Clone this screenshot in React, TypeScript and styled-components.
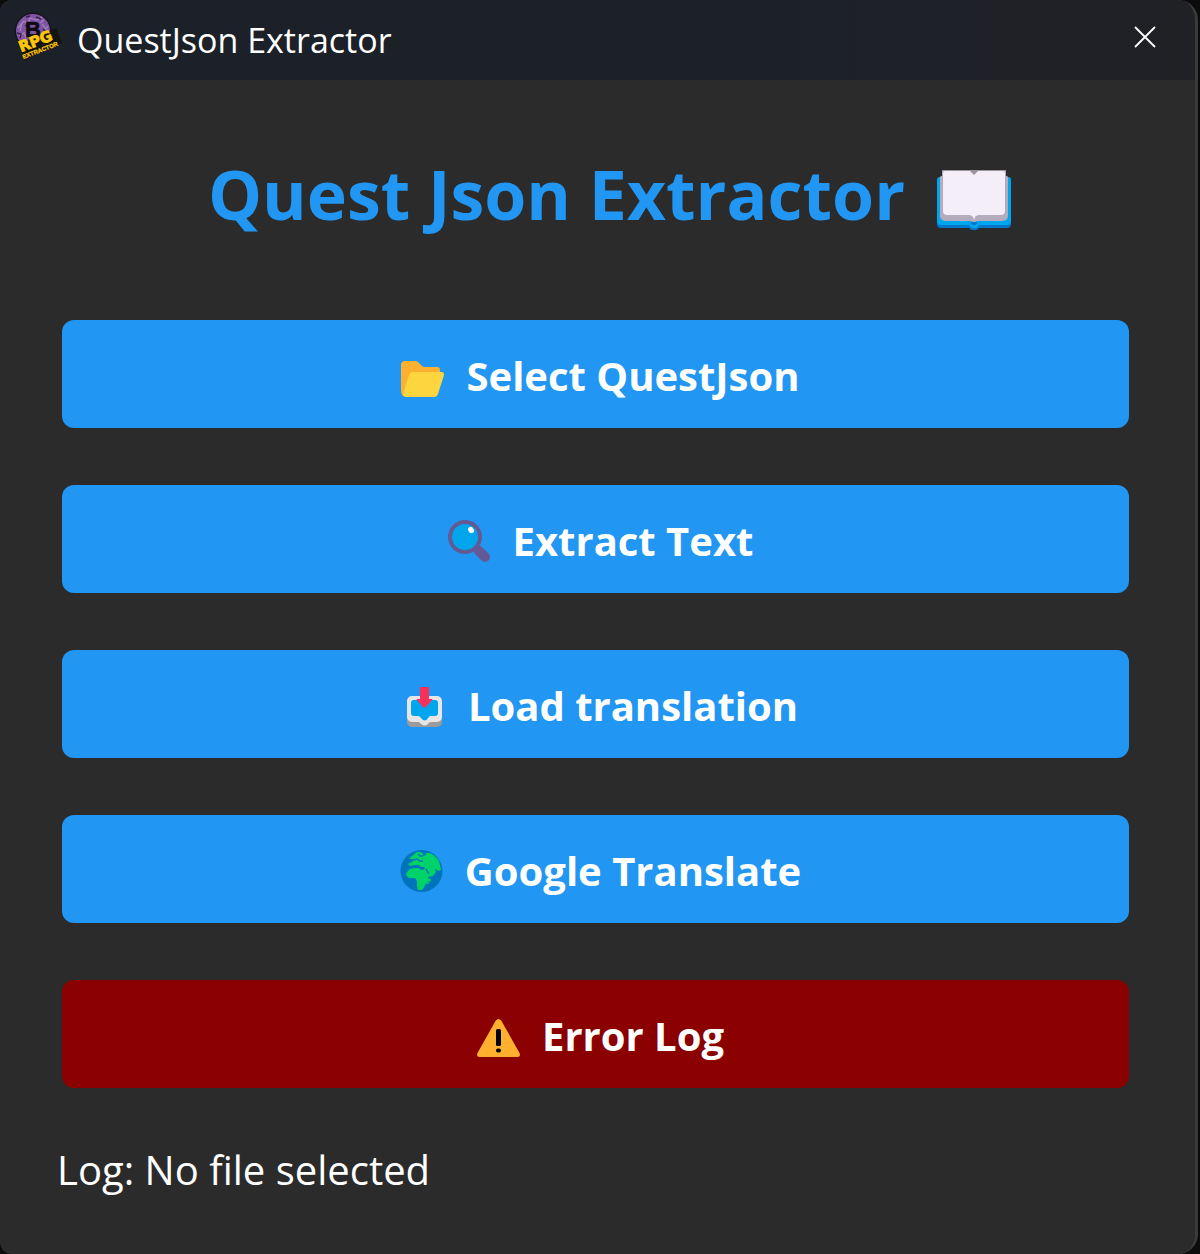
import React from 'react';
import styled, { createGlobalStyle } from 'styled-components';

const GlobalStyle = createGlobalStyle`
  *, *::before, *::after { box-sizing: border-box; }
  body {
    margin: 0;
    background: #0c0c0c;
    font-family: "Segoe UI", "Open Sans", "Noto Sans", sans-serif;
    color: #ffffff;
  }
`;

const Window = styled.div`
  display: flex;
  flex-direction: column;
  min-height: 100vh;
  margin-right: 2px;
  border-right: 3px solid #3a3a3a;
  border-radius: 12px 20px 20px 12px;
  background: #2b2b2b;
  overflow: hidden;
`;

const TitleBar = styled.header`
  display: flex;
  align-items: center;
  height: 80px;
  padding: 0 28px 0 14px;
  background: linear-gradient(90deg, #1c2129 0%, #1c2028 60%, #202125 100%);
`;

const WindowTitle = styled.span`
  flex: 1;
  margin-left: 15px;
  font-size: 34px;
  line-height: 48px;
`;

const CloseButton = styled.button`
  display: flex;
  align-items: center;
  justify-content: center;
  width: 44px;
  height: 44px;
  margin-bottom: 6px;
  padding: 0;
  border: 0;
  background: transparent;
  color: #ffffff;
  cursor: pointer;
`;

const Content = styled.main`
  display: flex;
  flex-direction: column;
  padding: 64px 66px 48px 62px;
`;

const Heading = styled.h1`
  display: flex;
  align-items: center;
  justify-content: center;
  gap: 32px;
  margin: 0 0 76px;
  padding-left: 28px;
  color: #2196f3;
  font-size: 68px;
  font-weight: 700;
  line-height: 100px;
  white-space: nowrap;
`;

const Actions = styled.div`
  display: flex;
  flex-direction: column;
  gap: 57px;
`;

const ActionButton = styled.button<{ $danger?: boolean }>`
  display: flex;
  align-items: center;
  justify-content: center;
  gap: 22px;
  height: 108px;
  padding: 4px 0 0 10px;
  border: 0;
  border-radius: 12px;
  background: ${({ $danger }) => ($danger ? '#8b0000' : '#2196f3')};
  color: #ffffff;
  font-family: inherit;
  font-size: 40px;
  font-weight: 700;
  line-height: 56px;
  white-space: nowrap;
  cursor: pointer;
`;

const Status = styled.p`
  margin: 54px 0 0 -5px;
  font-size: 40px;
  line-height: 56px;
`;

const Glyph = styled.svg`
  display: block;
  flex: none;
`;

const AppLogo = () => (
  <Glyph width="48" height="56" viewBox="0 0 48 56" aria-hidden="true">
    <circle cx="19" cy="19" r="18.5" fill="#15131b" />
    <circle cx="19" cy="19" r="17" fill="#8054a3" />
    <path d="M4 16l6-7 4 3 2-6 7 2 5-3M5 24l5-3 2 5M28 12l4 5 2-3M27 21l4 2M8 11l-2 8M30 8l-4 3" fill="none" stroke="#b391cc" strokeWidth="1.3" opacity="0.7" />
    <path d="M3 21l4 1-1 4M11 14l3-2M29 17l4 4M12 5l4-1M22 5l5 2" fill="none" stroke="#33204a" strokeWidth="1.4" />
    <text x="11" y="25" fontFamily="Liberation Sans, sans-serif" fontWeight="700" fontSize="22" fill="#0d0a12" stroke="#0d0a12" strokeWidth="0.6">B</text>
    <path d="M4 32L42 16l6 15L11 48z" fill="#14140e" />
    <g transform="rotate(-21 8 40)" fill="#fdc70c" fontWeight="700">
      <text x="7" y="40" fontFamily="DejaVu Sans, sans-serif" fontSize="15" stroke="#fdc70c" strokeWidth="0.8">RPG</text>
      <text x="7" y="47" fontFamily="Liberation Sans, sans-serif" fontSize="6" stroke="#fdc70c" strokeWidth="0.3">EXTRACTOR</text>
    </g>
  </Glyph>
);

const CloseIcon = () => (
  <Glyph width="22" height="22" viewBox="0 0 22 22" aria-hidden="true">
    <path d="M1 1l20 20M21 1L1 21" stroke="currentColor" strokeWidth="1.8" fill="none" />
  </Glyph>
);

const BookIcon = () => (
  <Glyph width="74" height="76" viewBox="0 -14 74 76" aria-hidden="true">
    <path d="M4 9h66a4 4 0 0 1 4 4v41a4 4 0 0 1-4 4H42a5.500 4 0 0 1-10 0H4a4 4 0 0 1-4-4V13a4 4 0 0 1 4-4z" fill="#0077c8" />
    <path d="M3 7h68a3 3 0 0 1 3 3v41a4 4 0 0 1-4 4H42q-1 3-5 3t-5-3H4a4 4 0 0 1-4-4V10a3 3 0 0 1 3-3z" fill="#00a6ed" />
    <path d="M34 52h6q0 3-3 3t-3-3z" fill="#0077c8" />
    <path d="M5 0h64v6h1q1 0 1 2v38a5 5 0 0 1-5 5H42q-3 0-4 1h-2q-1-1-4-1H8a5 5 0 0 1-5-5V8q0-2 1-2h1z" fill="#b4acbc" />
    <path d="M6 3q0-2 2-2h25q3 0 4 3 1-3 4-3h25q2 0 2 2v38a4 4 0 0 1-4 4H42q-4 0-5 5-1-5-5-5H10a4 4 0 0 1-4-4z" fill="#f3eef8" />
    <path d="M5 0h64v1H5zM33 1h8l-4 4z" fill="#9b949f" />
  </Glyph>
);

const FolderIcon = () => (
  <Glyph width="43" height="43" viewBox="0 -1 43 43" aria-hidden="true">
    <path d="M4 5h10q2 0 3 1l4 4q1 1 3 1h12q3 0 3 3v8L7 41q-7 0-7-6V9q0-4 4-4z" fill="#ffb02e" />
    <path d="M12 16h29q2 0 2 3l-6 19q-1 3-4 3H6q-4 0-4-3l6-19q1-3 4-3z" fill="#fcd53f" />
  </Glyph>
);

const SearchIcon = () => (
  <Glyph width="43" height="43" viewBox="0 0 43 43" aria-hidden="true">
    <path d="M28 26l5 5" stroke="#635994" strokeWidth="5" />
    <path d="M31 31l6 6" stroke="#635994" strokeWidth="10" strokeLinecap="round" />
    <circle cx="17" cy="17" r="15" fill="#00a6ed" stroke="#635994" strokeWidth="4" />
    <ellipse cx="23" cy="10" rx="2.700" ry="3.300" transform="rotate(-30 23 10)" fill="#ffffff" />
  </Glyph>
);

const InboxIcon = () => (
  <Glyph width="43" height="43" viewBox="0 0 43 43" aria-hidden="true">
    <path d="M4 28h35v9a5 5 0 0 1-5 5H9a5 5 0 0 1-5-5z" fill="#9b9b9b" />
    <path d="M9 11h25a5 5 0 0 1 5 5v16a5 5 0 0 1-5 5h-6q-2 0-3 2-3 3-7 0-1-2-3-2H9a5 5 0 0 1-5-5V16a5 5 0 0 1 5-5z" fill="#e6e6e6" />
    <path d="M11 15h21q3 0 3 3v10q0 3-3 3h-4q-2 0-3 2-3 5-7 0-1-2-3-2h-4q-3 0-3-3V18q0-3 3-3z" fill="#00a6ed" />
    <path d="M17 2h9v12h3q1 0 0 1l-6 7q-1.500 1-3 0l-6-7q-1-1 0-1h3z" fill="#f8315a" />
  </Glyph>
);

const GlobeIcon = () => (
  <Glyph width="43" height="43" viewBox="0 0 43 43" aria-hidden="true">
    <circle cx="21.500" cy="21" r="21" fill="#0074ba" />
    <path d="M9 9l3-3 5-4 4 0 2 2 0 2 3-1 0-2 4 0q6 3 9 8l2 9-3 1-2-2-1 0 1 3-3 4-5 1 1 4-4 4-2 4-2 1h-3l-1-4v-5l-2-3-6 0-3-3 1-3 3-3 5-1 4 0 2 2 4-1-1-2-3 0-2-2-4 0-5 1-2-2 4-2 2-3z" fill="#00d26a" />
    <path d="M13 10l4-1 3 2 3 0M18 4l2 2 3 0M26 19l3 5" fill="none" stroke="#0074ba" strokeWidth="1.500" />
    <circle cx="29.500" cy="30" r="1.500" fill="#00d26a" />
    <circle cx="28" cy="33" r="1" fill="#00d26a" />
  </Glyph>
);

const WarningIcon = () => (
  <Glyph width="43" height="43" viewBox="0 -1 43 43" aria-hidden="true">
    <path d="M18.500 5q3-4 6 0l18 32q1.500 4-2 4h-38q-3.500 0-2-4z" fill="#ffb02e" />
    <rect x="19" y="13" width="5" height="17" rx="1.500" fill="#000000" />
    <rect x="19" y="32.500" width="5" height="4" rx="2" fill="#000000" />
  </Glyph>
);

const actions = [
  { label: 'Select QuestJson', Icon: FolderIcon },
  { label: 'Extract Text', Icon: SearchIcon },
  { label: 'Load translation', Icon: InboxIcon },
  { label: 'Google Translate', Icon: GlobeIcon },
  { label: 'Error Log', Icon: WarningIcon, danger: true },
];

export default function App() {
  return (
    <>
      <GlobalStyle />
      <Window>
        <TitleBar>
          <AppLogo />
          <WindowTitle>QuestJson Extractor</WindowTitle>
          <CloseButton type="button" aria-label="Close">
            <CloseIcon />
          </CloseButton>
        </TitleBar>
        <Content>
          <Heading>
            <span>Quest Json Extractor</span>
            <BookIcon />
          </Heading>
          <Actions>
            {actions.map(({ label, Icon, danger }) => (
              <ActionButton key={label} type="button" $danger={danger}>
                <Icon />
                <span>{label}</span>
              </ActionButton>
            ))}
          </Actions>
          <Status>Log: No file selected</Status>
        </Content>
      </Window>
    </>
  );
}
